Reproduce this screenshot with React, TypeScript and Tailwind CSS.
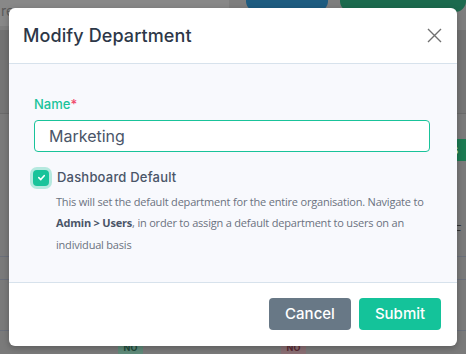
import React from "react";

export default function App() {
  return (
    <div className="relative w-[466px] h-[354px] overflow-hidden bg-[#7a7a7a]" style={{ fontFamily: "Inter, sans-serif" }}>
      {/* background page (dimmed) */}
      <div className="flex flex-col">
        <div className="flex items-start h-[30px] bg-[#7e7e7e]">
          <div className="w-[236px] h-[26px] rounded-br-[14px] bg-[#888888] text-[#5a5a5a] text-[14px] leading-[22px] pl-[1px] overflow-hidden">re</div>
          <div className="ml-[17px] -mt-[10px] w-[84px] h-[22px] rounded-full bg-[#1e5c80]"></div>
          <div className="ml-[12px] -mt-[10px] w-[130px] h-[22px] rounded-full bg-[#1c6a4e]"></div>
        </div>
        <div className="h-[30px] bg-[#727272]"></div>
        <div className="h-[54px] bg-[#757575] border-b border-[#6a6a6a]"></div>
        <div className="flex justify-end mt-[25px]">
          <div className="w-[20px] h-[22px] bg-[#1c7a52] text-[#cfe] text-[11px] leading-[22px]">us</div>
        </div>
        <div className="flex justify-end mt-[40px] text-[#333] text-[13px]">
          <div className="w-[12px]">' F</div>
        </div>
        <div className="mt-[16px] border-t border-[#6a6f7a]"></div>
        <div className="mt-[22px] border-t border-[#6a6f7a]"></div>
        <div className="mt-[50px] border-t border-[#6a6f7a]"></div>
      </div>
      <div className="absolute left-[118px] top-[339px] w-[25px] h-[16px] rounded-[3px] bg-[#5f8a79] text-[#1e4a3a] text-[9px] font-bold flex items-end justify-center pb-[1px]">NO</div>
      <div className="absolute left-[281px] top-[339px] w-[25px] h-[16px] rounded-[3px] bg-[#8a6f74] text-[#5a2a33] text-[9px] font-bold flex items-end justify-center pb-[1px]">NO</div>

      {/* modal */}
      <div className="absolute left-[9px] top-[8px] w-[448px] rounded-[6px] bg-white overflow-hidden shadow-[0_2px_6px_rgba(0,0,0,0.25)]">
        <div className="h-[56px] flex items-center justify-between pl-[14px] pr-[15px] border-b border-[#d7e2ec]">
          <h2 className="text-[18px] font-medium text-[#2d3748] tracking-[0.1px]">Modify Department</h2>
          <svg width="15" height="15" viewBox="0 0 15 15" className="text-[#707070]">
            <path d="M1 1L14 14M14 1L1 14" stroke="currentColor" strokeWidth="1.4" />
          </svg>
        </div>
        <div className="bg-[#f8f9fd] pl-[25px] pr-[27px] pt-[30px] pb-[26px]">
          <div className="text-[13px] leading-[20px] font-medium text-[#19c39a]">
            Name<span className="text-[#f0476a]">*</span>
          </div>
          <div className="mt-[6px] h-[32px] rounded-[4px] border-[1.5px] border-[#19c39a] bg-white flex items-center pl-[14px] text-[16px] text-[#4a5568]">
            Marketing
          </div>
          <div className="mt-[16px] flex items-center gap-[8px]">
            <div className="ml-[-1px] w-[16px] h-[16px] rounded-[4px] bg-[#19c39a] flex items-center justify-center shadow-[0_0_0_3px_rgba(25,195,154,0.3)]">
              <svg width="9" height="9" viewBox="0 0 10 10">
                <path d="M2 5.2L4.2 7.3L8 3" stroke="white" strokeWidth="1.8" fill="none" strokeLinecap="round" strokeLinejoin="round" />
              </svg>
            </div>
            <span className="text-[13px] font-medium text-[#4a5568] tracking-[0.2px]">Dashboard Default</span>
          </div>
          <p className="mt-[3px] ml-[22px] text-[11px] leading-[21.7px] tracking-[-0.2px] text-[#6b7280]" style={{ fontFamily: '"Open Sans", sans-serif' }}>
            This will set the default department for the entire organisation. Navigate to{" "}
            <span className="font-bold text-[#4a5568]">Admin &gt; Users</span>, in order to assign a default department to users on an individual basis
          </p>
        </div>
        <div className="h-[64px] border-t border-[#d7e2ec] flex items-center justify-end gap-[8px] pr-[16px]">
          <button className="w-[82px] h-[32px] rounded-[4px] bg-[#687886] text-white text-[15px] font-medium">Cancel</button>
          <button className="w-[82px] h-[32px] rounded-[4px] bg-[#14c39a] text-white text-[15px] font-medium">Submit</button>
        </div>
      </div>
    </div>
  );
}
